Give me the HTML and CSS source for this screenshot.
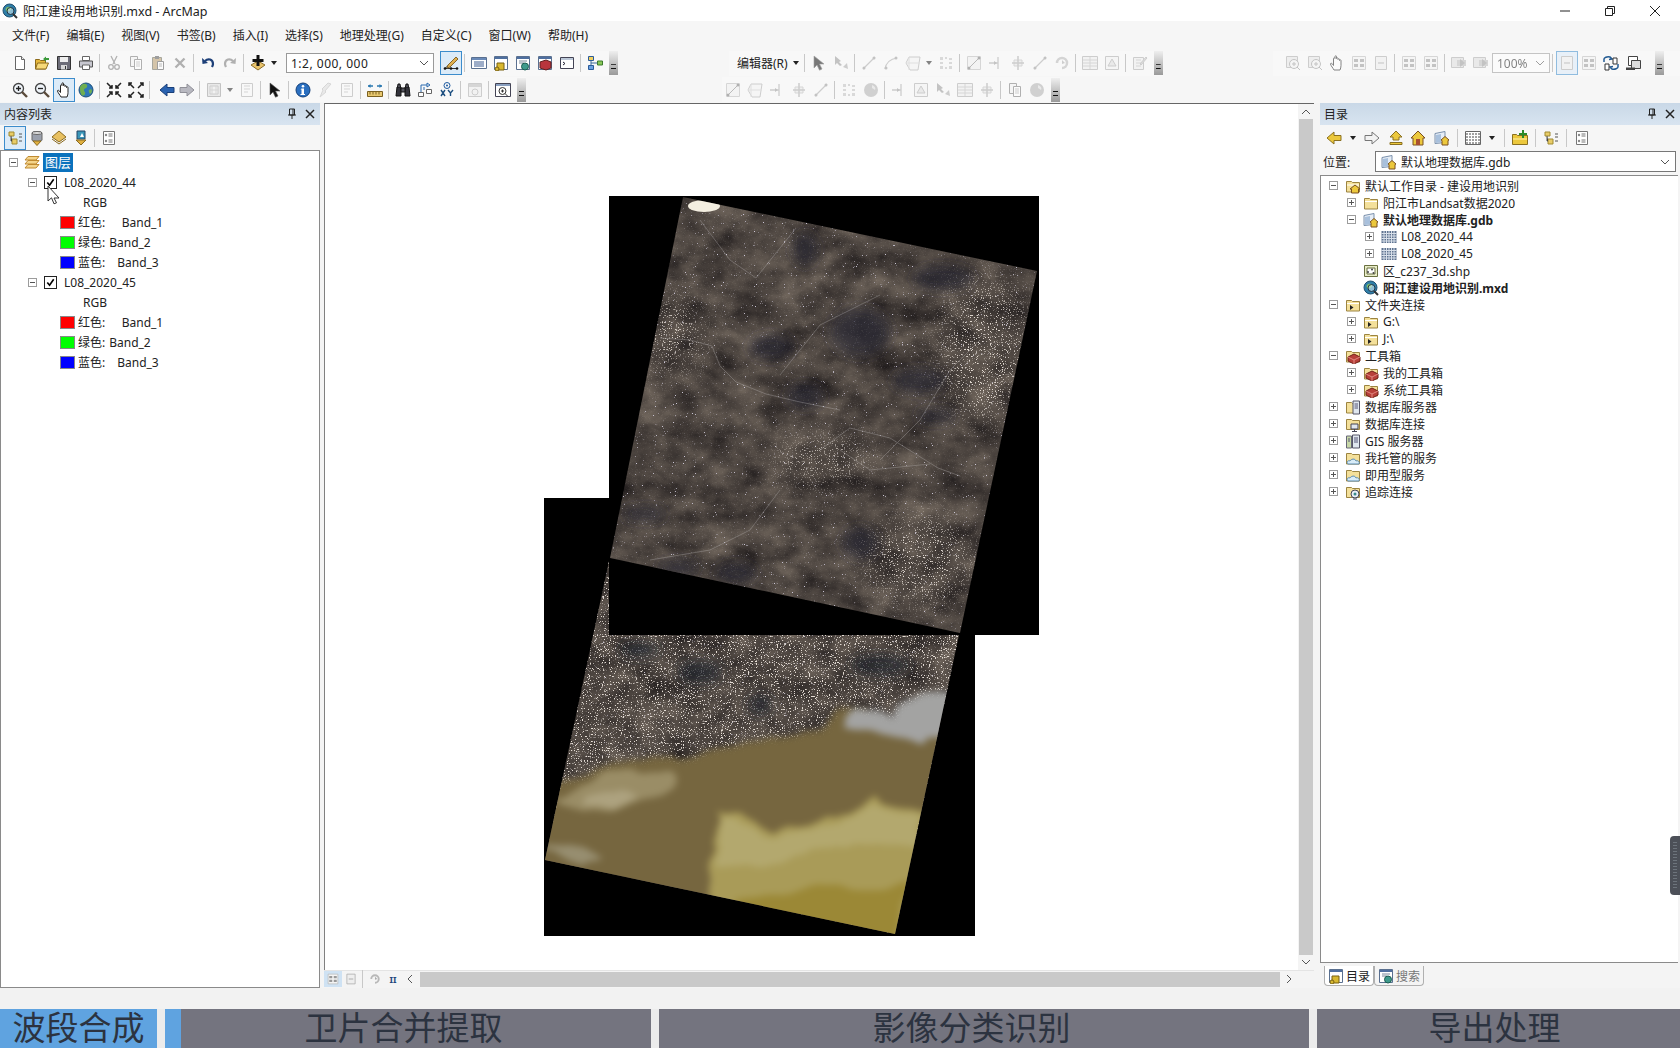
FILE: index.html
```html
<!DOCTYPE html>
<html lang="zh-CN">
<head>
  <meta charset="UTF-8" />
  <meta name="viewport" content="width=device-width, initial-scale=1.0"/>
  <title>阳江建设用地识别.mxd - ArcMap</title>
  <link rel="stylesheet" href="styles.css">
</head>
<body>

<svg class="defs" width="0" height="0">
  <defs>
    <symbol id="mxd" viewBox="0 0 16 16"><circle cx="7.5" cy="7.5" r="6.5" fill="#2f7fa8" stroke="#1d4f70"/><path d="M4 5c2-2 4-1 5 0s-1 3-2 3-1 2-2 1-2-3-1-4z" fill="#7fc06a"/><circle cx="8.5" cy="8" r="3.5" fill="#cfe7f2" fill-opacity=".6" stroke="#234"/><path d="M11 11l4 4" stroke="#333" stroke-width="2"/></symbol>
    <symbol id="new" viewBox="0 0 16 16"><path d="M3.5 1.5h6l3 3v10h-9z" fill="#fff" stroke="#666"/><path d="M9.5 1.5v3h3" fill="#eee" stroke="#666"/></symbol>
    <symbol id="open" viewBox="0 0 16 16"><path d="M1.5 4.5h4l1 1h5V14h-10z" fill="#e8b93c" stroke="#8c6a1c"/><path d="M1.5 14l2-6h11L12 14z" fill="#f7d978" stroke="#8c6a1c"/><path d="M9 4l3-2.500V3h3v2h-3v1.500z" fill="#3a9a3a"/></symbol>
    <symbol id="save" viewBox="0 0 16 16"><path d="M1.5 1.5h13v13h-13z" fill="#6d6d78" stroke="#333"/><path d="M4 2h8v5H4z" fill="#eee"/><path d="M5 10h6v4.500H5z" fill="#d9d9d9"/><path d="M9 11h1v3H9z" fill="#333"/></symbol>
    <symbol id="print" viewBox="0 0 16 16"><path d="M4.5 1.5h7v4h-7z" fill="#fff" stroke="#666"/><path d="M1.5 6h13v6h-13z" fill="#c8c8d0" stroke="#555"/><path d="M4.5 10h7v4.500h-7z" fill="#fff" stroke="#666"/></symbol>
    <symbol id="cut" viewBox="0 0 16 16"><path d="M5 1l4 8M11 1L7 9" stroke="#777" stroke-width="1.3" fill="none"/><circle cx="5" cy="12" r="2.3" fill="none" stroke="#777" stroke-width="1.3"/><circle cx="11" cy="12" r="2.3" fill="none" stroke="#777" stroke-width="1.3"/></symbol>
    <symbol id="copy" viewBox="0 0 16 16"><path d="M2.5 1.5h7v10h-7z" fill="#f4f4f4" stroke="#777"/><path d="M6.5 4.5h7v10h-7z" fill="#fff" stroke="#777"/><path d="M8 7h4M8 9h4M8 11h4" stroke="#aaa"/></symbol>
    <symbol id="paste" viewBox="0 0 16 16"><path d="M2.5 2.5h9v12h-9z" fill="#b89a6a" stroke="#665"/><path d="M5 1h4v3H5z" fill="#555"/><path d="M7.5 6.5h6v8h-6z" fill="#fff" stroke="#555"/><path d="M9 9h3M9 11h3" stroke="#888"/></symbol>
    <symbol id="del" viewBox="0 0 16 16"><path d="M3.5 3.5l9 9M12.5 3.500l-9 9" stroke="#777" stroke-width="2.4"/></symbol>
    <symbol id="undo" viewBox="0 0 16 16"><path d="M5 6c3-3 8-2 8 3 0 1-.5 2-1 3" fill="none" stroke="#1d3f78" stroke-width="2.2"/><path d="M2 3l.5 6L8 8z" fill="#1d3f78"/></symbol>
    <symbol id="redo" viewBox="0 0 16 16"><path d="M11 6C8 3 3 4 3 9c0 1 .5 2 1 3" fill="none" stroke="#777" stroke-width="2.2"/><path d="M14 3l-.5 6L8 8z" fill="#777"/></symbol>
    <symbol id="add" viewBox="0 0 16 16"><path d="M8 6l7 4-7 5-7-5z" fill="#e9c36a" stroke="#8a6d2a"/><path d="M6.5 0h3v4h4v3h-4v4h-3V7h-4V4h4z" fill="#111"/></symbol>
    <symbol id="editor" viewBox="0 0 16 16"><path d="M2 13.500h12M2 13.500l5-5" stroke="#333"/><circle cx="2" cy="13.500" r="1.300" fill="#111"/><circle cx="8" cy="13.500" r="1.300" fill="#111"/><circle cx="14" cy="13.500" r="1.300" fill="#111"/><path d="M5 10l8-8 2 2-8 8-3 1z" fill="#e0b050" stroke="#86672a"/></symbol>
    <symbol id="toc" viewBox="0 0 16 16"><path d="M.5 2.500h15v11H.5z" fill="#fff" stroke="#5a7090"/><path d="M1 3h14v2H1z" fill="#6a8ab8"/><path d="M3 7h10M3 9h10M3 11h10" stroke="#3a5a90"/></symbol>
    <symbol id="catwin" viewBox="0 0 16 16"><path d="M1.5 1.500h13v13h-13z" fill="#fff" stroke="#5a7090"/><path d="M2 2h12v2H2z" fill="#4f6f9f"/><path d="M4 8h7v7H4z" fill="#d8b830" stroke="#786010"/><circle cx="4" cy="14" r="2" fill="#d8b830" stroke="#786010"/></symbol>
    <symbol id="srchwin" viewBox="0 0 16 16"><path d="M1.5 1.500h13v13h-13z" fill="#fff" stroke="#5a7090"/><path d="M2 2h12v2H2z" fill="#4f6f9f"/><path d="M4 6h8M4 8h5" stroke="#78889a"/><circle cx="10" cy="11.500" r="3.500" fill="#3e9a8c" stroke="#1c5c50"/></symbol>
    <symbol id="boxwin" viewBox="0 0 16 16"><path d="M1.5 1.500h13v13h-13z" fill="#fff" stroke="#5a7090"/><path d="M2 2h12v2H2z" fill="#4f6f9f"/><path d="M3 7l6-2 5 2v6l-5 2-6-2z" fill="#b8353d" stroke="#602020"/></symbol>
    <symbol id="pywin" viewBox="0 0 16 16"><path d="M1.5 2.500h13v11h-13z" fill="#fff" stroke="#445"/><path d="M2 3h12v2H2z" fill="#bcc8d8"/><path d="M4 7l2 1.500L4 10" stroke="#223" fill="none"/></symbol>
    <symbol id="model" viewBox="0 0 16 16"><path d="M1.5 1.500h5v4h-5z" fill="#f0d060" stroke="#2a5a9a"/><path d="M1.5 10.500h5v4h-5z" fill="#6aa0e0" stroke="#2a5a9a"/><path d="M10.5 6h5v4h-5z" fill="#8ac858" stroke="#3a7a2a"/><path d="M4 5.500v5M4 8h6.500" stroke="#3a6a9a"/></symbol>
    <symbol id="zin" viewBox="0 0 16 16"><circle cx="6.500" cy="6.500" r="5" fill="#eef3f8" stroke="#444" stroke-width="1.3"/><path d="M4 6.500h5M6.500 4v5" stroke="#222" stroke-width="1.3"/><path d="M10 10l5 5" stroke="#5a4a3a" stroke-width="2.4"/></symbol>
    <symbol id="zout" viewBox="0 0 16 16"><circle cx="6.500" cy="6.500" r="5" fill="#eef3f8" stroke="#444" stroke-width="1.3"/><path d="M4 6.500h5" stroke="#222" stroke-width="1.3"/><path d="M10 10l5 5" stroke="#5a4a3a" stroke-width="2.4"/></symbol>
    <symbol id="hand" viewBox="0 0 16 16"><path d="M5 15c-1-2-3-4-3.500-6 0-1 1-1 2 0l1 1.500v-7c0-1 1.500-1 1.500 0v-2c0-1 1.500-1 1.500 0v2c0-1 1.500-1 1.500 0v1c0-1 1.500-1 1.500 0v1c0-1 1.500-1 1.500 0v5c0 2-.5 3-1 4.500z" fill="#fff" stroke="#222"/></symbol>
    <symbol id="globe" viewBox="0 0 16 16"><circle cx="8" cy="8" r="7" fill="#2f78b8" stroke="#1d4f78"/><path d="M5 2c3-1 5 1 4 3S6 6 6 8s2 2 1 4-3 2-4 0-1-4-1-6 1-3 3-4zM11 8c1-1 3-1 3 1s-2 3-2 3-2-3-1-4z" fill="#6fae50"/></symbol>
    <symbol id="fin" viewBox="0 0 16 16"><path d="M1 1l5 5M6 3v3H3M15 1l-5 5M10 3v3h3M1 15l5-5M6 13v-3H3M15 15l-5-5M10 13v-3h3" stroke="#222" stroke-width="1.5" fill="none"/></symbol>
    <symbol id="fout" viewBox="0 0 16 16"><path d="M6 6L1 1M1 4V1h3M10 6l5-5M15 4V1h-3M6 10l-5 5M1 12v3h3M10 10l5 5M15 12v3h-3" stroke="#222" stroke-width="1.5" fill="none"/></symbol>
    <symbol id="back" viewBox="0 0 16 16"><path d="M1 8l7-6v3.500h7v5H8V14z" fill="#2a62b0" stroke="#1a3f78"/></symbol>
    <symbol id="fwd" viewBox="0 0 16 16"><path d="M15 8L8 2v3.500H1v5h7V14z" fill="#b8b8c0" stroke="#909098"/></symbol>
    <symbol id="lyrs" viewBox="0 0 16 16"><path d="M1.500 1.500h13v13h-13z" fill="#ddd" stroke="#999"/><path d="M4 4h8v8H4z" fill="#eee" stroke="#aaa"/><path d="M6 4v8M10 4v8M4 8h8" stroke="#bbb"/></symbol>
    <symbol id="arrow" viewBox="0 0 16 16"><path d="M3 1l10 8H8.500l2.500 5-2.500 1.200L6 10l-3 3z" fill="#111" stroke="#555" stroke-width=".6"/></symbol>
    <symbol id="info" viewBox="0 0 16 16"><circle cx="8" cy="8" r="7" fill="#2a6fc0" stroke="#123f7a"/><circle cx="8" cy="4.200" r="1.300" fill="#fff"/><path d="M6.500 6.500H9V12h1v1H5.500v-1h1V7.500h-1z" fill="#fff"/></symbol>
    <symbol id="bolt" viewBox="0 0 16 16"><path d="M11 1l3 1-6 7 1 1-6 5 3-7-1-1z" fill="#ddd" stroke="#bbb"/></symbol>
    <symbol id="html" viewBox="0 0 16 16"><path d="M2.500 1.500h11v13h-11z" fill="#f8f8f8" stroke="#aaa"/><path d="M5 4h6M5 7h6M5 10h4" stroke="#bbb"/></symbol>
    <symbol id="measure" viewBox="0 0 16 16"><path d="M1 4h5M15 4h-5" stroke="#2a78b0" stroke-width="1.5"/><path d="M1 4l2.500-2v4zM15 4l-2.500-2v4z" fill="#2a78b0"/><path d="M.5 9.500h15v5H.5z" fill="#e8c870" stroke="#7a6020"/><path d="M3 9.500v3M6 9.500v3M9 9.500v3M12 9.500v3" stroke="#7a6020"/></symbol>
    <symbol id="find" viewBox="0 0 16 16"><path d="M1 14l1-9h4v9zM15 14l-1-9h-4v9z" fill="#33333b" stroke="#111"/><path d="M2.500 5L3 2h2l.5 3M13.500 5L13 2h-2l-.5 3M6 6h4v4H6z" fill="#55555f" stroke="#111"/></symbol>
    <symbol id="route" viewBox="0 0 16 16"><path d="M1.500 10.500h5v4h-5zM9.500 7.500h5v4h-5z" fill="#fff" stroke="#666"/><path d="M4 10V3h6M10 1l3 2-3 2zM7 8V5" stroke="#2a6ab0" fill="none"/></symbol>
    <symbol id="xy" viewBox="0 0 16 16"><circle cx="8" cy="3.500" r="3" fill="none" stroke="#1d5aa0"/><circle cx="8" cy="3.500" r="1" fill="#1d5aa0"/><path d="M2 8l4 6M6 8l-4 6M9 8l2.500 3L14 8M11.500 11v3" stroke="#1d4f80" stroke-width="1.4" fill="none"/></symbol>
    <symbol id="slider" viewBox="0 0 16 16"><path d="M1.500 1.500h13v13h-13z" fill="#eee" stroke="#aaa"/><path d="M2 2h12v3H2z" fill="#bbb"/><circle cx="8" cy="10" r="3" fill="none" stroke="#aaa"/></symbol>
    <symbol id="viewer" viewBox="0 0 16 16"><path d="M.5 1.500h15v13H.5z" fill="#fff" stroke="#445"/><path d="M1 2h14v2H1z" fill="#8aa0c0"/><circle cx="7.500" cy="9" r="3.500" fill="#fff" stroke="#333"/><path d="M6 9h3M7.500 7.500v3M10 11.500l3 3" stroke="#333"/></symbol>
    <symbol id="seg" viewBox="0 0 16 16"><path d="M1.500 1.500h13v13h-13z" fill="#f0f0f0" stroke="#bbb"/><path d="M3 13L13 3" stroke="#888"/><circle cx="3" cy="13" r="1.500" fill="#777"/><circle cx="13" cy="3" r="1.500" fill="#777"/></symbol>
    <symbol id="line" viewBox="0 0 16 16"><path d="M2 14L14 2" stroke="#aaa" stroke-width="1.2"/><circle cx="3" cy="13" r="1.500" fill="#999"/><circle cx="13" cy="3" r="1.500" fill="#999"/></symbol>
    <symbol id="curve" viewBox="0 0 16 16"><path d="M2 14C3 8 7 4 14 3" stroke="#aaa" fill="none" stroke-width="1.2"/><circle cx="3" cy="13" r="1.500" fill="#999"/><circle cx="13" cy="3" r="1.500" fill="#999"/></symbol>
    <symbol id="tri" viewBox="0 0 16 16"><path d="M1 8l4 7h8l2-13H4z" fill="#f4f4f4" stroke="#aaa"/><path d="M4 2v13M1 8h14" stroke="#ccc"/></symbol>
    <symbol id="edit1" viewBox="0 0 16 16"><path d="M2 1l6 5-2 1 3 3-2 1-3-3-2 2z" fill="#999"/><path d="M10 12l4-4 1 6z" fill="#aaa"/></symbol>
    <symbol id="dots" viewBox="0 0 16 16"><path d="M2 2h3v3H2zM7 2h2v2H7zM11 3h3v2h-3zM2 7h3v2H2zM11 7h3v2h-3zM2 11h3v3H2zM7 12h2v2H7zM11 11h3v3h-3z" fill="#c0c0c0"/></symbol>
    <symbol id="cross" viewBox="0 0 16 16"><path d="M4 5h8v6H4z" fill="#e8e8e8" stroke="#bbb"/><path d="M8 1v14M2 8h12" stroke="#aaa" stroke-width="1.5"/></symbol>
    <symbol id="split" viewBox="0 0 16 16"><path d="M1 8h9M10 2v12" stroke="#aaa" stroke-width="1.3"/><path d="M6 6l3 2-3 2z" fill="#999"/></symbol>
    <symbol id="ball" viewBox="0 0 16 16"><circle cx="8" cy="8" r="7" fill="#b0b0b0"/><path d="M9 3c3 1 4 3 3 5L9 6z" fill="#ddd"/></symbol>
    <symbol id="ring" viewBox="0 0 16 16"><path d="M3 8a5 5 0 1 1 5 5" fill="none" stroke="#b8b8b8" stroke-width="2.5"/><path d="M8 5l3 3-3 1z" fill="#aaa"/></symbol>
    <symbol id="table" viewBox="0 0 16 16"><path d="M.5 1.500h15v13H.5z" fill="#eee" stroke="#aaa"/><path d="M1 5h14M1 8h14M1 11h14M8 2v12" stroke="#bbb"/></symbol>
    <symbol id="attr" viewBox="0 0 16 16"><path d="M1.500 1.500h13v13h-13z" fill="#f4f4f4" stroke="#aaa"/><path d="M8 4l4 7H4z" fill="#ddd" stroke="#aaa"/></symbol>
    <symbol id="sketch" viewBox="0 0 16 16"><path d="M1.500 2.500h10v12h-10z" fill="#eee" stroke="#aaa"/><path d="M4 5h5M4 8h5M4 11h5" stroke="#bbb"/><path d="M8 9l6-7 1 1-6 7z" fill="#ccc" stroke="#aaa"/></symbol>
    <symbol id="lz" viewBox="0 0 16 16"><path d="M1.500 1.500h11v11h-11z" fill="#e6e6e6" stroke="#aaa"/><circle cx="9" cy="9" r="4.500" fill="#f4f4f4" stroke="#999"/><path d="M7 9h4M9 7v4M12 12l3 3" stroke="#999"/></symbol>
    <symbol id="lpage" viewBox="0 0 16 16"><path d="M.5 2.500h12v10H.5z" fill="#ddd" stroke="#aaa"/><path d="M6 5h9v6H6z" fill="#bbb"/><path d="M9 4l5 4-5 4z" fill="#999"/></symbol>
    <symbol id="grid4" viewBox="0 0 16 16"><path d="M1.500 1.500h13v13h-13z" fill="#f4f4f4" stroke="#bbb"/><path d="M3 4h4v3H3zM9 4h4v3H9zM3 9h4v3H3zM9 9h4v3H9z" fill="#999"/></symbol>
    <symbol id="lyt" viewBox="0 0 16 16"><path d="M2.500 1.500h11v13h-11z" fill="#eee" stroke="#aaa"/><path d="M5 8h6" stroke="#999"/></symbol>
    <symbol id="focus" viewBox="0 0 16 16"><path d="M1 7V4c0-1 3-3 6-2l2 2-3 .5M15 9v3c0 1-3 3-6 2l-2-2 3-.5" fill="none" stroke="#225a92" stroke-width="1.5"/><path d="M2 9h4v6H2zM10 3h4v6h-4z" fill="#fff" stroke="#333"/></symbol>
    <symbol id="change" viewBox="0 0 16 16"><path d="M3.500 1.500h9v9h-9z" fill="#fff" stroke="#444"/><path d="M6.500 5.500h9v8h-9z" fill="#ddd" stroke="#444"/><path d="M1 12.500h9V15H1z" fill="#444"/></symbol>
    <symbol id="tvtree" viewBox="0 0 16 16"><path d="M2 2h5v4H2z" fill="#e8cc68" stroke="#a08a30"/><path d="M5 9h5v5H5z" fill="#e8cc68" stroke="#a08a30"/><path d="M4 6v5h1M12 4h3M12 7h3M12 11h3" stroke="#555"/></symbol>
    <symbol id="dbarrow" viewBox="0 0 16 16"><path d="M3 3c0-2 10-2 10 0v7c0 2-10 2-10 0z" fill="#9aa0ac" stroke="#666"/><ellipse cx="8" cy="3" rx="5" ry="1.500" fill="#ddd" stroke="#666"/><path d="M4 11h8l-4 4.500z" fill="#e0b040" stroke="#8a6a20"/></symbol>
    <symbol id="lyrstack" viewBox="0 0 16 16"><path d="M8 1l7 6-7 5-7-5z" fill="#e8c060" stroke="#8a6a20"/><path d="M1 9l7 5 7-5" fill="none" stroke="#8a6a20"/></symbol>
    <symbol id="sheets" viewBox="0 0 16 16"><path d="M4 2.500h11L12 6H1z" fill="#f4d48a" stroke="#c08a30"/><path d="M4 6.500h11L12 10H1z" fill="#f4d48a" stroke="#c08a30"/><path d="M4 10.500h11L12 14H1z" fill="#f4d48a" stroke="#c08a30"/></symbol>
    <symbol id="selarrow" viewBox="0 0 16 16"><path d="M4 1h8v8H4z" fill="#3a96b8" stroke="#246"/><path d="M9 3l2 4H7z" fill="#fff"/><path d="M3 10h10l-5 5z" fill="#e0b040" stroke="#8a6a20"/></symbol>
    <symbol id="options" viewBox="0 0 16 16"><path d="M2.500 1.500h11v13h-11z" fill="#fff" stroke="#777"/><circle cx="5" cy="5" r="1.200" fill="#888"/><circle cx="5" cy="11" r="1.200" fill="#888"/><path d="M7.500 4h4M7.500 6h4M7.500 10h4M7.500 12h4" stroke="#777"/></symbol>
    <symbol id="cback" viewBox="0 0 16 16"><path d="M1 8l7-6v3.500h7v5H8V14z" fill="#ecc83c" stroke="#8a7020"/></symbol>
    <symbol id="cfwd" viewBox="0 0 16 16"><path d="M15 8L8 2v3.500H1v5h7V14z" fill="#f2f2f2" stroke="#777"/></symbol>
    <symbol id="cup" viewBox="0 0 16 16"><path d="M8 1l6 6h-3v3H5V7H2z" fill="#ecc83c" stroke="#8a7020"/><path d="M2 12.500h12v2H2z" fill="#ecc83c" stroke="#8a7020"/></symbol>
    <symbol id="chome" viewBox="0 0 16 16"><path d="M8 1L1 8h2v7h10V8h2z" fill="#ecc83c" stroke="#7a5020"/><path d="M6 9h4v6H6z" fill="#a85030"/></symbol>
    <symbol id="gdb" viewBox="0 0 16 16"><path d="M1 3.500l10-2v11l-10 1z" fill="#e6edf6" stroke="#7a90ac"/><path d="M2 5l5-1v8l-5 1z" fill="#a8c0dc"/><path d="M7 10l4-3.500 4 3.500-1 .5V15H8v-4.500z" fill="#ecc83c" stroke="#7a5020"/></symbol>
    <symbol id="gridv" viewBox="0 0 16 16"><path d="M.5 1.500h15v13H.5z" fill="#fff" stroke="#666"/><path d="M1 4h14M1 7h14M1 10h14M1 13h14" stroke="#444" stroke-dasharray="2 1"/></symbol>
    <symbol id="rast" viewBox="0 0 16 16"><path d="M.5 2h15v12H.5z" fill="#5f7390"/><path d="M.5 4.500h15M.5 7h15M.5 9.500h15M.5 12h15M3 2v12M5.500 2v12M8 2v12M10.500 2v12M13 2v12" stroke="#d8e0ea"/></symbol>
    <symbol id="newfold" viewBox="0 0 16 16"><path d="M.5 4.500h4l1 1h10v9H.5z" fill="#ecc83c" stroke="#8a7020"/><path d="M1 9h14" stroke="#fff2b0"/><path d="M10 0h2v3h3v2h-3v3h-2V5H7V3h3z" fill="#2a8a2a"/></symbol>
    <symbol id="homefold" viewBox="0 0 16 16"><path d="M1.500 3.500h5l1 1h7V14h-13z" fill="#f4e09a" stroke="#9c8440"/><path d="M2 7h12" stroke="#fff"/><path d="M10 7l-5 4h1.500v4h7v-4H15z" fill="#ecc83c" stroke="#7a5020"/></symbol>
    <symbol id="fold" viewBox="0 0 16 16"><path d="M1.500 3.500h5l1 1h7V14h-13z" fill="#f4e09a" stroke="#9c8440"/><path d="M2 6.500h12" stroke="#fff"/></symbol>
    <symbol id="foldc" viewBox="0 0 16 16"><path d="M1.500 3.500h5l1 1h7V14h-13z" fill="#f4e09a" stroke="#9c8440"/><path d="M2 6.500h12" stroke="#fff"/><path d="M5 8l3.500 2.500L5 13z" fill="#222"/></symbol>
    <symbol id="shp" viewBox="0 0 16 16"><path d="M1.500 2.500h13v11h-13z" fill="#e8ecc8" stroke="#6a7040"/><path d="M4 5h8v6H4z" fill="#fff" stroke="#6a7040"/><circle cx="5" cy="9" r="1" fill="#444"/><circle cx="9" cy="6.500" r="1" fill="#444"/><circle cx="10.500" cy="10" r="1" fill="#444"/></symbol>
    <symbol id="boxf" viewBox="0 0 16 16"><path d="M1.500 3.500h5l1 1h7V14h-13z" fill="#f4e09a" stroke="#9c8440"/><path d="M3 9l6-3 6 3v4l-6 3-6-3z" fill="#b8403a" stroke="#702018"/><path d="M3 9l6 3 6-3M9 12v4" stroke="#e08880" fill="none"/></symbol>
    <symbol id="dbsrv" viewBox="0 0 16 16"><path d="M1.500 3.500h5l1 1h7V14h-13z" fill="#f4e09a" stroke="#9c8440"/><path d="M8 2h6.500v13H8z" fill="#dfe6ee" stroke="#556"/><path d="M9.500 5H13M9.500 7H13M9.500 9H13" stroke="#557"/></symbol>
    <symbol id="dbcon" viewBox="0 0 16 16"><path d="M1.500 3.500h5l1 1h7v9h-13z" fill="#f4e09a" stroke="#9c8440"/><path d="M6 8h7v5H6z" fill="#dfe6ee" stroke="#445"/><path d="M9.500 13v2M7 15.500h5" stroke="#445"/></symbol>
    <symbol id="gissrv" viewBox="0 0 16 16"><path d="M1.500 3h5v12h-5z" fill="#c8d8a8" stroke="#667"/><path d="M7.500 2h7v13h-7z" fill="#dfe6ee" stroke="#556"/><path d="M9 5h4M9 7h4M9 9h4M3 6h2M3 8h2" stroke="#557"/></symbol>
    <symbol id="cloud" viewBox="0 0 16 16"><path d="M1.500 3.500h5l1 1h7V14h-13z" fill="#f4e09a" stroke="#9c8440"/><path d="M3 14c-2-2 0-4 2-3 1-2 5-3 6 0 2-1 4 1 3 3z" fill="#d8ecf8" stroke="#5a8ab0"/></symbol>
    <symbol id="track" viewBox="0 0 16 16"><path d="M1.500 3.500h5l1 1h7v9h-13z" fill="#f4e09a" stroke="#9c8440"/><circle cx="10" cy="10" r="4" fill="#e8eef6" stroke="#445"/><circle cx="10" cy="10" r="1.500" fill="#3a8a8a"/><path d="M8 15h4" stroke="#445"/></symbol>
    <symbol id="chev" viewBox="0 0 10 6"><path d="M1 1l4 4 4-4" fill="none" stroke="#555"/></symbol>

    <filter id="landTex" x="0" y="0" width="100%" height="100%" color-interpolation-filters="sRGB">
      <feTurbulence type="fractalNoise" baseFrequency=".03 .04" numOctaves="6" seed="7" result="low"/>
      <feColorMatrix in="low" type="matrix" values=".4 0 0 0 .1  .37 0 0 0 .085  .32 0 0 0 .09  0 0 0 0 1" result="base"/>
      <feTurbulence type="fractalNoise" baseFrequency=".9" numOctaves="2" seed="11" result="hi"/>
      <feColorMatrix in="hi" type="matrix" values="0 0 0 0 .8  0 0 0 0 .78  0 0 0 0 .84  8 0 0 0 -5.800" result="spk"/>
      <feMerge><feMergeNode in="base"/><feMergeNode in="spk"/></feMerge>
    </filter>
    <filter id="urbanTex" x="0" y="0" width="100%" height="100%" color-interpolation-filters="sRGB">
      <feTurbulence type="fractalNoise" baseFrequency=".85" numOctaves="2" seed="23"/>
      <feColorMatrix type="matrix" values="0 0 0 0 .9  0 0 0 0 .87  0 0 0 0 .84  9 0 0 0 -5.500"/>
    </filter>
    <filter id="swirl" x="-5%" y="-5%" width="110%" height="110%" color-interpolation-filters="sRGB">
      <feTurbulence type="fractalNoise" baseFrequency=".016 .024" numOctaves="3" seed="5" result="t"/>
      <feDisplacementMap in="SourceGraphic" in2="t" scale="28" xChannelSelector="R" yChannelSelector="G"/>
      <feGaussianBlur stdDeviation="3.5"/>
    </filter>
    <filter id="soft"><feGaussianBlur stdDeviation="6"/></filter>
    <filter id="softer"><feGaussianBlur stdDeviation="14"/></filter>
    <filter id="thin"><feGaussianBlur stdDeviation=".5"/></filter>

    <clipPath id="upperClip"><polygon points="683,197 1037,271 960,633 610,558"/></clipPath>
    <clipPath id="lowerClip"><polygon points="609,561 959,635 895,934 545,860"/></clipPath>
    <mask id="upperUrban">
      <rect x="325" y="104" width="973" height="866" fill="#111"/>
      <g filter="url(#softer)" fill="#fff">
        <ellipse cx="985" cy="350" rx="42" ry="70"/>
        <ellipse cx="672" cy="335" rx="26" ry="34"/>
        <ellipse cx="920" cy="560" rx="50" ry="40"/>
        <ellipse cx="820" cy="460" rx="46" ry="18"/>
      </g>
    </mask>
  </defs>
</svg>

<div class="app">

  <header class="titlebar">
    <svg class="ic title-ic"><use href="#mxd"/></svg>
    <span class="title-text">阳江建设用地识别.mxd - ArcMap</span>
    <div class="win-btns">
      <svg class="win-btn" viewBox="0 0 12 12"><path d="M1 6h10" stroke="#222"/></svg>
      <svg class="win-btn" viewBox="0 0 12 12"><path d="M1.500 3.500h7v7h-7zM3.500 3.500v-2h7v7h-2" fill="none" stroke="#222"/></svg>
      <svg class="win-btn" viewBox="0 0 12 12"><path d="M1 1l10 10M11 1L1 11" stroke="#222"/></svg>
    </div>
  </header>

  <nav class="menubar">
    <span>文件(F)</span><span>编辑(E)</span><span>视图(V)</span><span>书签(B)</span><span>插入(I)</span>
    <span>选择(S)</span><span>地理处理(G)</span><span>自定义(C)</span><span>窗口(W)</span><span>帮助(H)</span>
  </nav>

  <div class="toolrow">
    <div class="toolbar">
      <span class="btn"><svg class="ic"><use href="#new"/></svg></span>
      <span class="btn"><svg class="ic"><use href="#open"/></svg></span>
      <span class="btn"><svg class="ic"><use href="#save"/></svg></span>
      <span class="btn"><svg class="ic"><use href="#print"/></svg></span>
      <i class="sep"></i>
      <span class="btn off"><svg class="ic"><use href="#cut"/></svg></span>
      <span class="btn off"><svg class="ic"><use href="#copy"/></svg></span>
      <span class="btn off"><svg class="ic"><use href="#paste"/></svg></span>
      <span class="btn off"><svg class="ic"><use href="#del"/></svg></span>
      <i class="sep"></i>
      <span class="btn"><svg class="ic"><use href="#undo"/></svg></span>
      <span class="btn off"><svg class="ic"><use href="#redo"/></svg></span>
      <i class="sep"></i>
      <span class="btn"><svg class="ic"><use href="#add"/></svg></span>
      <i class="drop"></i>
      <div class="combo scale-combo"><span>1:2, 000, 000</span><svg class="chev"><use href="#chev"/></svg></div>
      <span class="btn active"><svg class="ic"><use href="#editor"/></svg></span>
      <i class="sep"></i>
      <span class="btn"><svg class="ic"><use href="#toc"/></svg></span>
      <span class="btn"><svg class="ic"><use href="#catwin"/></svg></span>
      <span class="btn"><svg class="ic"><use href="#srchwin"/></svg></span>
      <span class="btn"><svg class="ic"><use href="#boxwin"/></svg></span>
      <span class="btn"><svg class="ic"><use href="#pywin"/></svg></span>
      <i class="sep"></i>
      <span class="btn"><svg class="ic"><use href="#model"/></svg></span>
      <i class="grip"></i>
    </div>

    <div class="toolbar editor-bar">
      <span class="editor-label">编辑器(R)</span>
      <i class="drop"></i>
      <i class="sep"></i>
      <span class="btn off"><svg class="ic"><use href="#arrow"/></svg></span>
      <span class="btn off"><svg class="ic"><use href="#edit1"/></svg></span>
      <i class="sep"></i>
      <span class="btn off"><svg class="ic"><use href="#line"/></svg></span>
      <span class="btn off"><svg class="ic"><use href="#curve"/></svg></span>
      <span class="btn off"><svg class="ic"><use href="#tri"/></svg></span>
      <i class="drop off"></i>
      <span class="btn off"><svg class="ic"><use href="#dots"/></svg></span>
      <i class="sep"></i>
      <span class="btn off"><svg class="ic"><use href="#seg"/></svg></span>
      <span class="btn off"><svg class="ic"><use href="#split"/></svg></span>
      <span class="btn off"><svg class="ic"><use href="#cross"/></svg></span>
      <span class="btn off"><svg class="ic"><use href="#line"/></svg></span>
      <span class="btn off"><svg class="ic"><use href="#ring"/></svg></span>
      <i class="sep"></i>
      <span class="btn off"><svg class="ic"><use href="#table"/></svg></span>
      <span class="btn off"><svg class="ic"><use href="#attr"/></svg></span>
      <i class="sep"></i>
      <span class="btn off"><svg class="ic"><use href="#sketch"/></svg></span>
      <i class="grip"></i>
    </div>

    <div class="toolbar layout-bar">
      <span class="btn off"><svg class="ic"><use href="#lz"/></svg></span>
      <span class="btn off"><svg class="ic"><use href="#lz"/></svg></span>
      <span class="btn off"><svg class="ic"><use href="#hand"/></svg></span>
      <span class="btn off"><svg class="ic"><use href="#grid4"/></svg></span>
      <span class="btn off"><svg class="ic"><use href="#lyt"/></svg></span>
      <i class="sep"></i>
      <span class="btn off"><svg class="ic"><use href="#grid4"/></svg></span>
      <span class="btn off"><svg class="ic"><use href="#grid4"/></svg></span>
      <i class="sep"></i>
      <span class="btn off"><svg class="ic"><use href="#lpage"/></svg></span>
      <span class="btn off"><svg class="ic"><use href="#lpage"/></svg></span>
      <div class="combo pct-combo off"><span>100%</span><svg class="chev"><use href="#chev"/></svg></div>
      <i class="sep"></i>
      <span class="btn active off"><svg class="ic"><use href="#lyt"/></svg></span>
      <span class="btn off"><svg class="ic"><use href="#grid4"/></svg></span>
      <span class="btn"><svg class="ic"><use href="#focus"/></svg></span>
      <span class="btn"><svg class="ic"><use href="#change"/></svg></span>
      <i class="grip"></i>
    </div>
  </div>

  <div class="toolrow">
    <div class="toolbar">
      <span class="btn"><svg class="ic"><use href="#zin"/></svg></span>
      <span class="btn"><svg class="ic"><use href="#zout"/></svg></span>
      <span class="btn active"><svg class="ic"><use href="#hand"/></svg></span>
      <span class="btn"><svg class="ic"><use href="#globe"/></svg></span>
      <i class="sep"></i>
      <span class="btn"><svg class="ic"><use href="#fin"/></svg></span>
      <span class="btn"><svg class="ic"><use href="#fout"/></svg></span>
      <i class="sep wide"></i>
      <span class="btn nav"><svg class="ic"><use href="#back"/></svg></span>
      <span class="btn nav"><svg class="ic"><use href="#fwd"/></svg></span>
      <i class="sep"></i>
      <span class="btn off"><svg class="ic"><use href="#lyrs"/></svg></span>
      <i class="drop off"></i>
      <span class="btn off"><svg class="ic"><use href="#html"/></svg></span>
      <i class="sep"></i>
      <span class="btn"><svg class="ic"><use href="#arrow"/></svg></span>
      <i class="sep"></i>
      <span class="btn"><svg class="ic"><use href="#info"/></svg></span>
      <span class="btn off"><svg class="ic"><use href="#bolt"/></svg></span>
      <span class="btn off"><svg class="ic"><use href="#html"/></svg></span>
      <i class="sep"></i>
      <span class="btn"><svg class="ic"><use href="#measure"/></svg></span>
      <i class="sep"></i>
      <span class="btn"><svg class="ic"><use href="#find"/></svg></span>
      <span class="btn"><svg class="ic"><use href="#route"/></svg></span>
      <span class="btn"><svg class="ic"><use href="#xy"/></svg></span>
      <i class="sep"></i>
      <span class="btn off"><svg class="ic"><use href="#slider"/></svg></span>
      <i class="sep"></i>
      <span class="btn"><svg class="ic"><use href="#viewer"/></svg></span>
      <i class="grip"></i>
    </div>

    <div class="toolbar edit2-bar">
      <span class="btn off"><svg class="ic"><use href="#seg"/></svg></span>
      <span class="btn off"><svg class="ic"><use href="#tri"/></svg></span>
      <span class="btn off"><svg class="ic"><use href="#split"/></svg></span>
      <span class="btn off"><svg class="ic"><use href="#cross"/></svg></span>
      <span class="btn off"><svg class="ic"><use href="#line"/></svg></span>
      <i class="sep"></i>
      <span class="btn off"><svg class="ic"><use href="#dots"/></svg></span>
      <span class="btn off"><svg class="ic"><use href="#ball"/></svg></span>
      <i class="sep"></i>
      <span class="btn off"><svg class="ic"><use href="#split"/></svg></span>
      <span class="btn off"><svg class="ic"><use href="#attr"/></svg></span>
      <span class="btn off"><svg class="ic"><use href="#edit1"/></svg></span>
      <span class="btn off"><svg class="ic"><use href="#table"/></svg></span>
      <span class="btn off"><svg class="ic"><use href="#cross"/></svg></span>
      <i class="sep"></i>
      <span class="btn off"><svg class="ic"><use href="#copy"/></svg></span>
      <span class="btn off"><svg class="ic"><use href="#ball"/></svg></span>
      <i class="grip"></i>
    </div>
  </div>

  <main class="workspace">

    <section class="dock toc-dock">
      <div class="dock-head">
        <span>内容列表</span>
        <svg class="pin" viewBox="0 0 10 12"><path d="M2.500 1h5v6h-5zM1 7h8M5 7v4M6 1v6" fill="none" stroke="#222"/></svg>
        <svg class="close" viewBox="0 0 10 10"><path d="M1 1l8 8M9 1L1 9" stroke="#222" stroke-width="1.5"/></svg>
      </div>
      <div class="dock-tools">
        <span class="btn active"><svg class="ic"><use href="#tvtree"/></svg></span>
        <span class="btn"><svg class="ic"><use href="#dbarrow"/></svg></span>
        <span class="btn"><svg class="ic"><use href="#lyrstack"/></svg></span>
        <span class="btn"><svg class="ic"><use href="#selarrow"/></svg></span>
        <i class="sep"></i>
        <span class="btn"><svg class="ic"><use href="#options"/></svg></span>
      </div>
      <div class="toc-tree">
        <div class="toc-row root"><i class="exp"></i><svg class="ic layers-ic"><use href="#sheets"/></svg><span class="sel">图层</span></div>

        <div class="toc-row layer"><i class="exp"></i><i class="chk"><svg viewBox="0 0 12 12"><path d="M2.500 6L5 9l4.500-6.500" fill="none" stroke="#000" stroke-width="1.8"/></svg></i><span>L08_2020_44</span></div>
        <div class="toc-row rgb">RGB</div>
        <div class="toc-row band"><i class="swatch red"></i>红色:<span class="b1">Band_1</span></div>
        <div class="toc-row band"><i class="swatch green"></i>绿色:<span class="b2">Band_2</span></div>
        <div class="toc-row band"><i class="swatch blue"></i>蓝色:<span class="b3">Band_3</span></div>

        <div class="toc-row layer"><i class="exp"></i><i class="chk"><svg viewBox="0 0 12 12"><path d="M2.500 6L5 9l4.500-6.500" fill="none" stroke="#000" stroke-width="1.8"/></svg></i><span>L08_2020_45</span></div>
        <div class="toc-row rgb">RGB</div>
        <div class="toc-row band"><i class="swatch red"></i>红色:<span class="b1">Band_1</span></div>
        <div class="toc-row band"><i class="swatch green"></i>绿色:<span class="b2">Band_2</span></div>
        <div class="toc-row band"><i class="swatch blue"></i>蓝色:<span class="b3">Band_3</span></div>

        <svg class="cursor" viewBox="0 0 13 20"><path d="M1 1v15l3.500-3.200 2.500 6 2.500-1L7 13h5z" fill="#fff" stroke="#333"/></svg>
      </div>
    </section>

    <section class="mapview">
      <div class="map-top">
        <svg class="map-canvas" viewBox="325 104 973 866">
          <!-- lower scene -->
          <rect x="544" y="498" width="431" height="438" fill="#000"/>
          <g clip-path="url(#lowerClip)">
            <rect x="530" y="550" width="450" height="400" filter="url(#landTex)"/>
            <rect x="530" y="550" width="450" height="300" filter="url(#urbanTex)"/>
            <g filter="url(#soft)" fill="#1f2029" opacity=".75">
              <ellipse cx="700" cy="672" rx="22" ry="12"/>
              <ellipse cx="640" cy="650" rx="20" ry="8"/>
              <ellipse cx="760" cy="705" rx="12" ry="10"/>
              <ellipse cx="880" cy="665" rx="30" ry="10"/>
            </g>
            <g filter="url(#swirl)">
              <path d="M530 790L559 782 619 764 668 760 681 767 709 752 750 745 792 735 819 725 832 712 860 706 881 716 900 720 925 735 975 735V950H530z" fill="#76663f"/>
              <path d="M840 726l12-18 24 4 16 4 14-18 30-8 30-4v50l-50 2-30-4-30-6z" fill="#a3a3a2"/>
              <path d="M555 800c30-20 60-30 100-25s20 12-10 18-20 20-50 15-40 0-40-8z" fill="#9a8d66"/>
              <path d="M575 800c20-10 40-12 60-8l-20 12z" fill="#ada27f"/>
              <path d="M545 856c15-10 40-8 50-2l-15 10z" fill="#978e70"/>
              <path d="M723 814l48 14 69-10 34-24 45 15 56 6v135H725l-20-50 4-47z" fill="#a99b58"/>
              <path d="M723 820l48 14 69-10 34-24 51 14-6 30-90 4-70 16-44-4z" fill="#b3a86e"/>
              <path d="M735 902l70-14 100-4-8 60H735z" fill="#9b8836"/>
            </g>
          </g>
          <!-- upper scene sits on top of the lower one -->
          <rect x="609" y="196" width="430" height="439" fill="#000"/>
          <g clip-path="url(#upperClip)">
            <rect x="600" y="190" width="445" height="450" filter="url(#landTex)"/>
            <g filter="url(#soft)" fill="#22242e" opacity=".7">
              <ellipse cx="805" cy="249" rx="12" ry="16"/>
              <ellipse cx="943" cy="278" rx="30" ry="12"/>
              <ellipse cx="860" cy="332" rx="30" ry="24"/>
              <ellipse cx="771" cy="347" rx="22" ry="12"/>
              <ellipse cx="919" cy="381" rx="26" ry="12"/>
              <ellipse cx="936" cy="416" rx="20" ry="7"/>
              <ellipse cx="860" cy="543" rx="18" ry="16"/>
              <ellipse cx="736" cy="573" rx="20" ry="10"/>
              <ellipse cx="678" cy="568" rx="20" ry="8"/>
              <ellipse cx="805" cy="396" rx="18" ry="12"/>
              <ellipse cx="644" cy="514" rx="22" ry="7"/>
            </g>
            <rect x="600" y="190" width="445" height="450" filter="url(#urbanTex)" mask="url(#upperUrban)"/>
            <g fill="none" stroke="#c9c6c8" stroke-width="1" opacity=".3" filter="url(#thin)">
              <path d="M660 338l30 2 22 6 8 20 16 16 30 12 34 8 40 8"/>
              <path d="M820 450l30-22 40 10 48 30 22 8"/>
              <path d="M700 220l30 40 26 18 40-50"/>
              <path d="M780 490l-30 40-40 20-60 10M840 450l30 20 60-6"/>
              <path d="M780 375l40-50 60-30M880 460l40-40 30-50 30-30"/>
            </g>
            <ellipse cx="704" cy="206" rx="16" ry="6" fill="#f3eee0" filter="url(#thin)"/>
          </g>
        </svg>
        <div class="vscroll">
          <svg class="chev up"><use href="#chev"/></svg>
          <div class="vtrack"></div>
          <svg class="chev"><use href="#chev"/></svg>
        </div>
      </div>
      <div class="map-bottom">
        <span class="view-btn on"><svg class="ic small"><use href="#grid4"/></svg></span>
        <span class="view-btn"><svg class="ic small"><use href="#lyt"/></svg></span>
        <i class="sep"></i>
        <span class="view-btn"><svg class="ic small"><use href="#ring"/></svg></span>
        <span class="view-btn pause">II</span>
        <svg class="chev left"><use href="#chev"/></svg>
        <div class="htrack"></div>
        <svg class="chev right"><use href="#chev"/></svg>
      </div>
    </section>

    <section class="dock cat-dock">
      <div class="dock-head">
        <span>目录</span>
        <svg class="pin" viewBox="0 0 10 12"><path d="M2.500 1h5v6h-5zM1 7h8M5 7v4M6 1v6" fill="none" stroke="#222"/></svg>
        <svg class="close" viewBox="0 0 10 10"><path d="M1 1l8 8M9 1L1 9" stroke="#222" stroke-width="1.5"/></svg>
      </div>
      <div class="dock-tools cat-tools">
        <span class="btn"><svg class="ic"><use href="#cback"/></svg></span>
        <i class="drop"></i>
        <span class="btn"><svg class="ic"><use href="#cfwd"/></svg></span>
        <span class="btn gap"><svg class="ic"><use href="#cup"/></svg></span>
        <span class="btn"><svg class="ic"><use href="#chome"/></svg></span>
        <span class="btn gap"><svg class="ic"><use href="#gdb"/></svg></span>
        <i class="sep"></i>
        <span class="btn"><svg class="ic"><use href="#gridv"/></svg></span>
        <i class="drop"></i>
        <i class="sep"></i>
        <span class="btn"><svg class="ic"><use href="#newfold"/></svg></span>
        <i class="sep"></i>
        <span class="btn"><svg class="ic"><use href="#tvtree"/></svg></span>
        <i class="sep"></i>
        <span class="btn"><svg class="ic"><use href="#options"/></svg></span>
      </div>
      <div class="location">
        <span class="loc-label">位置:</span>
        <div class="combo loc-combo"><svg class="ic"><use href="#gdb"/></svg><span>默认地理数据库.gdb</span><svg class="chev"><use href="#chev"/></svg></div>
      </div>
      <div class="cat-tree">
        <div class="cat-row l0"><i class="exp"></i><svg class="ic"><use href="#homefold"/></svg><span>默认工作目录 - 建设用地识别</span></div>
        <div class="cat-row l1"><i class="exp plus"></i><svg class="ic"><use href="#fold"/></svg><span>阳江市Landsat数据2020</span></div>
        <div class="cat-row l1 bold"><i class="exp"></i><svg class="ic"><use href="#gdb"/></svg><span>默认地理数据库.gdb</span></div>
        <div class="cat-row l2"><i class="exp plus"></i><svg class="ic"><use href="#rast"/></svg><span>L08_2020_44</span></div>
        <div class="cat-row l2"><i class="exp plus"></i><svg class="ic"><use href="#rast"/></svg><span>L08_2020_45</span></div>
        <div class="cat-row l1"><i class="exp none"></i><svg class="ic"><use href="#shp"/></svg><span>区_c237_3d.shp</span></div>
        <div class="cat-row l1 bold"><i class="exp none"></i><svg class="ic"><use href="#mxd"/></svg><span>阳江建设用地识别.mxd</span></div>
        <div class="cat-row l0"><i class="exp"></i><svg class="ic"><use href="#foldc"/></svg><span>文件夹连接</span></div>
        <div class="cat-row l1"><i class="exp plus"></i><svg class="ic"><use href="#foldc"/></svg><span>G:\</span></div>
        <div class="cat-row l1"><i class="exp plus"></i><svg class="ic"><use href="#foldc"/></svg><span>J:\</span></div>
        <div class="cat-row l0"><i class="exp"></i><svg class="ic"><use href="#boxf"/></svg><span>工具箱</span></div>
        <div class="cat-row l1"><i class="exp plus"></i><svg class="ic"><use href="#boxf"/></svg><span>我的工具箱</span></div>
        <div class="cat-row l1"><i class="exp plus"></i><svg class="ic"><use href="#boxf"/></svg><span>系统工具箱</span></div>
        <div class="cat-row l0"><i class="exp plus"></i><svg class="ic"><use href="#dbsrv"/></svg><span>数据库服务器</span></div>
        <div class="cat-row l0"><i class="exp plus"></i><svg class="ic"><use href="#dbcon"/></svg><span>数据库连接</span></div>
        <div class="cat-row l0"><i class="exp plus"></i><svg class="ic"><use href="#gissrv"/></svg><span>GIS 服务器</span></div>
        <div class="cat-row l0"><i class="exp plus"></i><svg class="ic"><use href="#cloud"/></svg><span>我托管的服务</span></div>
        <div class="cat-row l0"><i class="exp plus"></i><svg class="ic"><use href="#cloud"/></svg><span>即用型服务</span></div>
        <div class="cat-row l0"><i class="exp plus"></i><svg class="ic"><use href="#track"/></svg><span>追踪连接</span></div>
      </div>
      <div class="cat-tabs">
        <span class="tab"><svg class="ic"><use href="#catwin"/></svg>目录</span>
        <span class="tab dim"><svg class="ic"><use href="#srchwin"/></svg>搜索</span>
      </div>
    </section>
  </main>

  <footer class="steps">
    <div class="step step-1">波段合成</div>
    <div class="step step-2"><i class="progress"></i><span>卫片合并提取</span></div>
    <div class="step step-3">影像分类识别</div>
    <div class="step step-4">导出处理</div>
  </footer>

  <div class="meter"><i></i></div>
</div>

</body>
</html>
```

FILE: styles.css
```css
* {
  box-sizing: border-box;
}

body {
  margin: 0;
  background: #f2f2f2;
  font-family: "Noto Sans", "Noto Sans CJK SC", sans-serif;
  font-size: 12px;
  color: #222;
  overflow: hidden;
}

.defs {
  display: block;
  height: 0;
}

.app {
  position: relative;
  width: 1680px;
  height: 1048px;
  display: flex;
  flex-direction: column;
  overflow: hidden;
}

.ic {
  width: 16px;
  height: 16px;
  display: block;
  flex: none;
}

/* title + menu */
.titlebar {
  height: 21px;
  background: #fff;
  display: flex;
  align-items: center;
  padding-left: 2px;
}

.title-text {
  margin-left: 5px;
  font-size: 12.5px;
}

.win-btns {
  margin-left: auto;
  display: flex;
  gap: 33px;
  padding-right: 19px;
}

.win-btn {
  width: 12px;
  height: 12px;
}

.menubar {
  height: 29px;
  padding: 0 0 2px 12px;
  display: flex;
  align-items: center;
  gap: 17px;
  background: #f6f6f6;
}

/* toolbars */
.toolrow {
  height: 26.5px;
  display: flex;
  align-items: center;
  background: #f6f6f6;
}

.toolbar {
  display: flex;
  align-items: center;
  height: 25px;
  padding-left: 9px;
  background: #f8f8f8;
}

.editor-bar {
  margin-left: 111px;
  padding-left: 8px;
}

.edit2-bar {
  margin-left: 196px;
  padding-left: 0;
}

.layout-bar {
  margin-left: auto;
  padding-right: 16px;
}

.layout-bar .grip {
  margin-left: 11px;
}

.btn {
  width: 22px;
  height: 24px;
  display: flex;
  align-items: center;
  justify-content: center;
  flex: none;
  border: 1px solid transparent;
}

.btn.nav {
  width: 20px;
}

.btn.gap {
  margin-left: 2px;
}

.btn.active {
  border-color: #3c8ccc;
  background: #dcebf8;
}

.off {
  opacity: .55;
}

.sep {
  width: 6px;
  height: 20px;
  flex: none;
  position: relative;
}

.sep.wide {
  width: 10px;
}

.sep::after {
  content: "";
  position: absolute;
  left: 2px;
  top: 1px;
  bottom: 1px;
  width: 1px;
  background: #c8c8c8;
}

.drop {
  width: 0;
  height: 0;
  margin: 0 3px 0 2px;
  flex: none;
  border: 3px solid transparent;
  border-top: 4px solid #222;
  border-bottom: 0;
}

.grip {
  width: 9px;
  height: 24px;
  margin-left: 3px;
  flex: none;
  background: linear-gradient(#efefef, #9a9a9a);
  position: relative;
}

.grip::after {
  content: "";
  position: absolute;
  left: 2px;
  bottom: 3px;
  width: 5px;
  height: 7px;
  border-top: 1px solid #111;
  background: linear-gradient(#111, #111) center 3px / 5px 1px no-repeat;
  clip-path: polygon(0 0, 100% 0, 100% 60%, 50% 100%, 0 60%);
}

.combo {
  height: 20px;
  background: #fff;
  border: 1px solid #9a9a9a;
  display: flex;
  align-items: center;
  flex: none;
}

.chev {
  width: 10px;
  height: 6px;
  flex: none;
}

.scale-combo {
  width: 148px;
  margin: 0 6px;
  padding: 0 4px;
  justify-content: space-between;
  letter-spacing: .5px;
}

.pct-combo {
  width: 58px;
  padding: 0 4px;
  justify-content: space-between;
}

.editor-label {
  margin-right: 3px;
}

/* main area */
.workspace {
  height: 885px;
  display: grid;
  grid-template-columns: 320px 1000px 1fr;
  background: #f4f4f4;
}

.dock {
  display: flex;
  flex-direction: column;
  min-width: 0;
}

.dock-head {
  height: 22px;
  flex: none;
  display: flex;
  align-items: center;
  padding: 0 5px 0 4px;
  background: linear-gradient(#c9d8e7, #d8e4f0);
}

.dock-head span {
  margin-right: auto;
}

.pin {
  width: 10px;
  height: 12px;
  margin-right: 8px;
}

.close {
  width: 10px;
  height: 10px;
}

.dock-tools {
  height: 25px;
  flex: none;
  display: flex;
  align-items: center;
  padding-left: 4px;
  background: #f6f6f6;
}

.toc-tree {
  position: relative;
  flex: 1;
  background: #fff;
  border: 1px solid #8a8a8a;
  padding-top: 1px;
}

.toc-row {
  height: 20px;
  display: flex;
  align-items: center;
  white-space: nowrap;
}

.exp {
  width: 9px;
  height: 9px;
  flex: none;
  border: 1px solid #9c9c9c;
  background: linear-gradient(#555, #555) center / 5px 1px no-repeat #fff;
}

.exp.plus {
  background:
    linear-gradient(#555, #555) center / 5px 1px no-repeat,
    linear-gradient(#555, #555) center / 1px 5px no-repeat,
    #fff;
}

.exp.none {
  visibility: hidden;
}

.root {
  padding-left: 8px;
}

.layers-ic {
  margin-left: 6px;
}

.sel {
  margin-left: 3px;
  padding: 0 2px;
  height: 19px;
  line-height: 19px;
  font-size: 13px;
  background: #0b72bd;
  color: #fff;
}

.layer {
  padding-left: 27px;
}

.chk {
  width: 13px;
  height: 13px;
  margin: 0 7px 0 7px;
  flex: none;
  background: #fff;
  border: 1px solid #222;
  display: block;
}

.chk svg {
  display: block;
}

.rgb {
  padding-left: 82px;
}

.band {
  padding-left: 59px;
}

.swatch {
  width: 15px;
  height: 13px;
  margin-right: 3px;
  flex: none;
  border: 1px solid #888;
}

.red { background: #f00; }
.green { background: #0f0; }
.blue { background: #00f; }

.b1 { margin-left: 16.5px; }
.b2 { margin-left: 4px; }
.b3 { margin-left: 12px; }

.cursor {
  position: absolute;
  left: 46px;
  top: 34px;
  width: 13px;
  height: 20px;
}

/* map */
.mapview {
  padding-left: 4px;
  padding-right: 6px;
  display: flex;
  flex-direction: column;
}

.map-top {
  height: 867px;
  display: flex;
  border-top: 1px solid #666;
  border-left: 1px solid #808080;
  background: #fff;
}

.map-canvas {
  width: 973px;
  height: 866px;
  display: block;
  flex: none;
}

.vscroll {
  flex: 1;
  display: flex;
  flex-direction: column;
  align-items: center;
  background: #f4f4f4;
  padding: 5px 0;
  gap: 4px;
}

.vtrack {
  flex: 1;
  align-self: stretch;
  margin: 0 1px;
  background: #c9c9c9;
}

.chev.up {
  transform: rotate(180deg);
}

.map-bottom {
  height: 17px;
  padding-right: 20px;
  display: flex;
  align-items: center;
  background: #f4f4f4;
  border-top: 1px solid #e4e4e4;
}

.view-btn {
  width: 18px;
  height: 16px;
  display: flex;
  align-items: center;
  justify-content: center;
  flex: none;
  font-size: 9px;
  color: #24487c;
  font-weight: 700;
}

.view-btn.on {
  background: #cfe2f3;
}

.ic.small {
  width: 12px;
  height: 12px;
}

.chev.left {
  transform: rotate(90deg);
  margin: 0 0 0 3px;
}

.chev.right {
  transform: rotate(-90deg);
  margin: 0 0 0 4px;
}

.htrack {
  flex: 1;
  height: 15px;
  margin-left: 5px;
  background: #c9c9c9;
}

/* catalog */
.cat-tools {
  padding-left: 3px;
}

.cat-tools .drop {
  margin: 0 5px;
}

.cat-tools .sep {
  width: 9px;
}

.cat-tools .sep::after {
  left: 4px;
}

.location {
  height: 25px;
  flex: none;
  display: flex;
  align-items: center;
  padding: 0 4px 2px 3px;
  background: #f6f6f6;
}

.loc-label {
  width: 52px;
}

.loc-combo {
  flex: 1;
  height: 21px;
  padding: 0 5px;
  gap: 4px;
  border-color: #777;
}

.loc-combo .chev {
  margin-left: auto;
}

.cat-tree {
  flex: 1;
  margin-right: 2px;
  padding-top: 1px;
  background: #fff;
  border: 1px solid #8a8a8a;
  border-width: 1px 0 1px 1px;
}

.cat-row {
  height: 17px;
  display: flex;
  align-items: center;
  white-space: nowrap;
}

.cat-row .ic {
  margin-left: 7px;
  margin-right: 4px;
}

.cat-row.bold {
  font-weight: 700;
}

.l0 { padding-left: 8px; }
.l1 { padding-left: 26px; }
.l2 { padding-left: 44px; }

.cat-tabs {
  height: 25px;
  flex: none;
  display: flex;
  padding: 3px 0 0 4px;
  background: #f4f4f4;
}

.tab {
  height: 20px;
  display: flex;
  align-items: center;
  gap: 2px;
  padding: 0 3px;
  background: #fff;
  border: 1px solid #b0b0b0;
  border-top: 0;
  border-radius: 0 0 4px 4px;
}

.tab.dim {
  color: #777;
  background: #f4f4f4;
}

/* step strip */
.steps {
  height: 39px;
  margin-top: 21px;
  display: flex;
  gap: 8px;
  background: #ececec;
  font-size: 33px;
  line-height: 38px;
  color: #2c3340;
}

.step {
  display: flex;
  justify-content: center;
  background: #74747f;
  white-space: nowrap;
}

.step-1 {
  width: 157px;
  background: #5fa3e0;
}

.step-2 {
  width: 486px;
  padding-right: 9px;
  position: relative;
}

.progress {
  position: absolute;
  left: 0;
  top: 0;
  bottom: 0;
  width: 16px;
  background: #5fa3e0;
}

.step-3 {
  width: 650px;
  padding-right: 25px;
}

.step-4 {
  flex: 1;
  padding-right: 8px;
}

/* little desktop meter at the right edge */
.meter {
  position: absolute;
  right: 0;
  top: 836px;
  width: 10px;
  height: 59px;
  padding: 6px 3px;
  background: #4c5058;
  border-radius: 4px 0 0 4px;
}

.meter i {
  display: block;
  height: 100%;
  background: repeating-linear-gradient(#6d747c 0 1px, transparent 1px 3px);
}
```
